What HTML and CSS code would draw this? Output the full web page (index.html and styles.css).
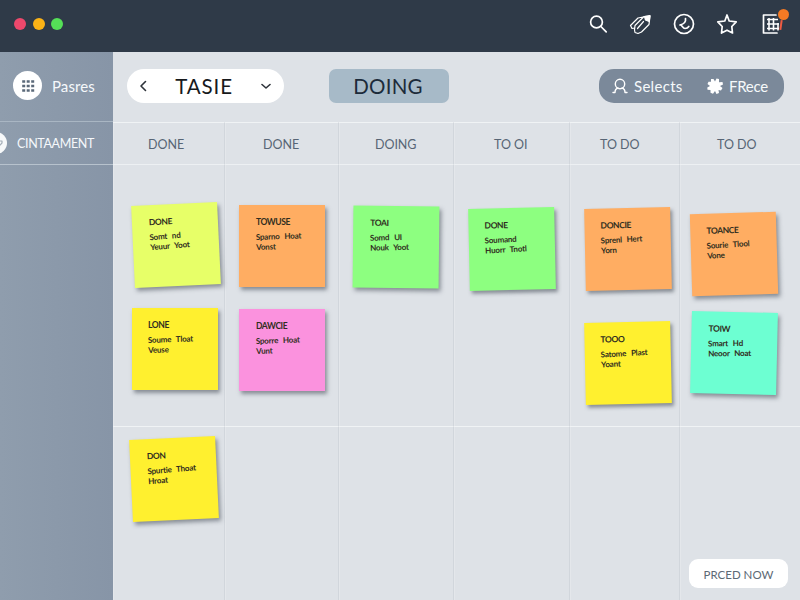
FILE: index.html
```html
<!DOCTYPE html>
<html lang="en">
<head>
<meta charset="utf-8">
<title>Task board</title>
<link rel="stylesheet" href="styles.css">
</head>
<body>
<div class="app">
  <header class="titlebar">
    <div class="dots"><i class="dot red"></i><i class="dot amber"></i><i class="dot green"></i></div>
    <nav class="tools">
      <svg width="24" height="24" viewBox="0 0 24 24"><circle cx="10.500" cy="10" r="5.900"/><path d="M14.900 14.500l5.300 5.300"/></svg>
      <svg width="24" height="24" viewBox="0 0 24 24" class="thin"><path d="M1.500 13.500L9 6l5-1M1.500 13.500l1.500 3 2.500-.5M5.500 18l.5 2.500 3 1 3.500-1.500 7.500-7.500 1-8.500-6 .5-9 9zM8.500 16.500l6-7"/><path d="M15.500 4.500l5.500-1-.8 6-3.700-1.500z" fill="#fff"/></svg>
      <svg width="24" height="24" viewBox="0 0 24 24"><circle cx="12" cy="12" r="9.500"/><path d="M13.500 6.500c.5 3-1.500 5.500-5.500 6.500 2-.5 2.500 3.500 5 3.500 1.500 0 3-.8 3.800-2"/></svg>
      <svg width="24" height="24" viewBox="0 0 24 24"><path d="M12 3l2.200 6 7 .8-4.400 4.700.7 6.500-5.500-2.800L6.500 21l.7-6.500-4.400-4.700 7-.8z"/></svg>
      <span class="apps">
        <svg width="24" height="24" viewBox="0 0 24 24"><path d="M16 3H3.500v18H17"/><path class="grid-lines" d="M7 7.500h11M7 12h12M7 16.500h12M9 6v12.500M13.500 6v12.500M18 11v7.500"/></svg>
        <b class="badge"></b><b class="tail"></b>
      </span>
    </nav>
  </header>
  <div class="body">
    <aside class="sidebar">
      <div class="side-top">
        <span class="side-icon"><svg width="14" height="14" viewBox="0 0 14 14"><path d="M1.200 2.500h12M1.200 7h12M1.200 11.500h12" stroke-dasharray="3 1.500"/></svg></span>
        <span class="side-name">Pasres</span>
      </div>
      <div class="side-row"><span class="side-knob"><svg width="6" height="8" viewBox="0 0 6 8"><path d="M1 2h3v2L2 6"/></svg></span><span>CINTAAMENT</span></div>
    </aside>
    <main class="main">
      <div class="toolbar">
        <div class="picker">
          <svg width="8" height="12" viewBox="0 0 8 12"><path d="M6.500 1.500L2 6l4.500 4.500"/></svg>
          <span class="picker-name">TASIE</span>
          <svg width="10" height="7" viewBox="0 0 10 7"><path d="M1 1.500l4 3.500 4-3.500"/></svg>
        </div>
        <div class="state">DOING</div>
        <div class="actions">
          <svg width="16" height="16" viewBox="0 0 16 16"><circle cx="8" cy="6" r="4.700"/><path d="M1 14.500h2c0-2.500 1-4 3-4.500M15 14.500h-2c0-2.500-1-4-3-4.500"/></svg>
          <span class="act-one">Selects</span>
          <svg width="16" height="16" viewBox="0 0 16 16"><path class="solid" d="M4 1l2.500 0L8 3.500 9.500 .5l2.500 .5V4.200l3.500-.2.500 2.500L13 8l2.500 2-1.500 2.500-2.500-.5.500 3-2.500 1L8 13 6 15.800l-2.500-1V12l-3-.2L.3 9.500 3 8 .5 6 1.500 3.800H4z"/></svg>
          <span class="act-two">FRece</span>
        </div>
      </div>
      <div class="board">
        <div class="head h1">DONE</div><div class="head h2">DONE</div><div class="head h3">DOING</div>
        <div class="head h4">TO OI</div><div class="head h5">TO DO</div><div class="head h6">TO DO</div>

        <div class="cell c1">
          <article class="note lime"><h3>DONE</h3><p>Somt nd<br>Yeuur Yoot</p></article>
          <article class="note yellow"><h3>LONE</h3><p>Soume Tloat<br>Veuse</p></article>
        </div>
        <div class="cell c2">
          <article class="note orange"><h3>TOWUSE</h3><p>Sparno Hoat<br>Vonst</p></article>
          <article class="note pink"><h3>DAWCIE</h3><p>Sporre Hoat<br>Vunt</p></article>
        </div>
        <div class="cell c3"><article class="note green"><h3>TOAI</h3><p>Somd UI<br>Nouk Yoot</p></article></div>
        <div class="cell c4"><article class="note green"><h3>DONE</h3><p>Soumand<br>Huorr Tnotl</p></article></div>
        <div class="cell c5">
          <article class="note orange"><h3>DONCIE</h3><p>Sprenl Hert<br>Yorn</p></article>
          <article class="note yellow"><h3>TOOO</h3><p>Satome Plast<br>Yoant</p></article>
        </div>
        <div class="cell c6">
          <article class="note orange"><h3>TOANCE</h3><p>Sourie Tlool<br>Vone</p></article>
          <article class="note teal"><h3>TOIW</h3><p>Smart Hd<br>Neoor Noat</p></article>
        </div>

        <div class="cell low c7"><article class="note yellow"><h3>DON</h3><p>Spurtie Thoat<br>Hroat</p></article></div>
        <div class="cell low"></div><div class="cell low"></div><div class="cell low"></div><div class="cell low"></div>
        <div class="cell low last"><button class="now">PRCED NOW</button></div>
      </div>
    </main>
  </div>
</div>
</body>
</html>
```
FILE: styles.css
```css
* { box-sizing: border-box; }
body { margin: 0; font-family: Lato, "Liberation Sans", sans-serif; color: #576575; }
svg { display: block; fill: none; stroke: #fff; stroke-width: 1.7; stroke-linecap: round; stroke-linejoin: round; }
.app { width: 800px; height: 600px; display: flex; flex-direction: column; overflow: hidden; }

.titlebar { height: 52px; flex: none; background: #2f3a48; display: flex; justify-content: space-between; padding: 12px 16px 0 14px; }
.dots { display: flex; gap: 6.500px; padding-top: 6px; }
.dot { width: 12px; height: 12px; border-radius: 50%; }
.red { background: #ed486c; }
.amber { background: #fcb316; }
.green.dot { background: #55e057; }
.tools { display: flex; gap: 19px; }
.thin { stroke-width: 1.2; }
.grid-lines { stroke-width: 1.600; stroke-linecap: butt; }
.apps { position: relative; margin-left: 2px; }
.badge { position: absolute; right: -5px; top: -3px; width: 11px; height: 11px; border-radius: 50%; background: #f47a24; }
.tail { position: absolute; right: 2px; top: 8px; width: 2px; height: 10px; background: #ef5b42; transform: rotate(8deg); }

.body { flex: 1; display: flex; }
.sidebar { width: 113px; flex: none; background: linear-gradient(90deg, #8f9dad, #8795a7); color: #f5f8fb; }
.side-top { height: 70px; display: flex; align-items: center; padding: 0 0 2px 13px; border-bottom: 1px solid #a9b6c3; }
.side-icon { width: 29px; height: 29px; border-radius: 50%; background: #fff; display: grid; place-items: center; }
.side-icon svg { stroke: #5b6979; stroke-width: 2.400; stroke-linecap: butt; }
.side-name { margin-left: 10px; font-size: 15px; letter-spacing: .1px; }
.side-row { height: 43px; display: flex; align-items: center; border-bottom: 1px solid #b7c2cd; font-size: 12.500px; letter-spacing: -.35px; }
.side-knob { width: 22px; height: 22px; border-radius: 50%; background: #f7f9fa; margin: 0 10px 0 -15px; flex: none; display: flex; justify-content: flex-end; align-items: center; padding-right: 3px; }
.side-knob svg { stroke: #a4aeb8; stroke-width: 1.2; }

.main { flex: 1; display: flex; flex-direction: column; background: #dee2e7; }
.toolbar { height: 70px; flex: none; display: flex; align-items: flex-start; padding: 17px 16px 0 14px; }
.picker { width: 157px; height: 34px; border-radius: 17px; background: #fff; display: flex; align-items: center; justify-content: space-between; padding: 0 13px 0 12px; }
.picker svg { stroke: #2e333a; stroke-width: 1.6; }
.picker-name { font-size: 20.500px; letter-spacing: .9px; color: #17191c; margin-left: 9px; margin-right: 9px; }
.state { width: 120px; height: 34px; line-height: 34px; margin-left: 45px; border-radius: 7px; background: #a7bac8; color: #1c2b3a; font-size: 20.500px; letter-spacing: .2px; text-align: center; padding-right: 2px; }
.actions { width: 185px; height: 34px; margin-left: auto; border-radius: 15px; background: #7b899a; color: #f6f9fb; display: flex; align-items: center; padding-left: 13px; font-size: 15px; letter-spacing: .3px; }
.actions svg { stroke-width: 1.4; }
.solid { fill: #fff; stroke: none; }
.act-one { width: 49px; margin: 0 24px 0 6px; }
.act-two { margin-left: 6px; letter-spacing: -.3px; }

.board { flex: 1; display: grid; grid-template-columns: 112px 114px 115px 116px 110px 120px; grid-template-rows: 43px 261px 1fr; }
.head { border-top: 1px solid #f0f3f5; border-bottom: 1px solid #edf0f3; border-right: 1px solid #d1d6dc; font-size: 12.500px; letter-spacing: -.05px; padding-top: 1px; display: flex; align-items: center; }
.head, .cell { box-shadow: inset 1px 0 #e4e7eb; }
.h1 { padding-left: 35px; }
.h2 { padding-left: 38px; }
.h3 { padding-left: 36px; }
.h4 { padding-left: 40px; }
.h5 { padding-left: 30px; }
.h6 { padding-left: 37px; border-right: 0; }
.cell { border-right: 1px solid #d1d6dc; display: flex; flex-direction: column; align-items: flex-start; }
.low { border-top: 1px solid #f0f3f5; }
.c6, .last { border-right: 0; }

.note { width: 86px; height: 82px; flex: none; padding: 12px 0 0 17px; color: #302d20; box-shadow: 2px 3px 4px rgba(50, 58, 70, .5); }
.note h3 { margin: 0 0 6px; font-size: 8.500px; line-height: 10px; font-weight: 700; letter-spacing: -.4px; }
.note p { margin: 0; font-size: 8px; line-height: 9.500px; font-weight: 700; letter-spacing: -.2px; word-spacing: 3px; transform: rotate(-2deg); transform-origin: left center; white-space: nowrap; }
.lime { background: #e7ff68; }
.yellow { background: #fff02f; }
.orange { background: #ffad62; }
.pink { background: #fb92de; }
.note.green { background: #8dff80; }
.teal { background: #6dffd2; }

.c1 { padding: 39px 0 0 19px; }
.c1 .lime { margin: 0 0 22px .5px; transform: rotate(-2.700deg); }
.c1 .yellow { padding-left: 16px; }
.c2 { padding: 40px 0 0 14px; gap: 22px; }
.c3 { padding: 41px 0 0 14px; }
.c3 .note { transform: rotate(.6deg); }
.c4 { padding: 43px 0 0 15px; }
.c4 .note { padding-left: 16px; transform: rotate(-1.200deg); }
.c5 { padding: 43px 0 0 15px; gap: 32px; }
.c5 .note { padding-left: 16px; transform: rotate(-1.200deg); }
.c6 { padding: 48px 0 0 11px; gap: 17px; }
.c6 .orange { padding-left: 16px; transform: rotate(-1.700deg); }
.c6 .teal { transform: rotate(1.300deg); }
.c7 { padding: 11px 0 0 18px; }
.c7 .note { transform: rotate(-2.700deg); }

.last { justify-content: flex-end; align-items: flex-end; padding: 0 12px 12px 0; }
.now { width: 99px; height: 29px; padding: 2px 0 0; border: 0; border-radius: 9px; background: #fff; color: #5d6974; font: 11.500px Lato, "Liberation Sans", sans-serif; }
```
